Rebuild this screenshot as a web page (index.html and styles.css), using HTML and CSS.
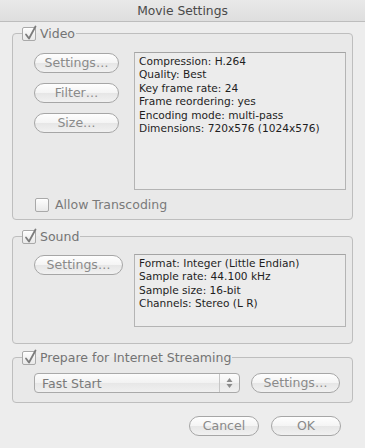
FILE: index.html
```html
<!DOCTYPE html>
<html lang="en">
<head>
    <meta charset="UTF-8">
    <meta name="viewport" content="width=device-width, initial-scale=1.0">
    <title>Movie Settings</title>
    <link rel="stylesheet" href="styles.css">
</head>
<body>
    <div class="window">
        <div class="titlebar">Movie Settings</div>

        <fieldset class="group group-video">
            <legend>
                <span class="check checked">
                    <svg width="14" height="14" viewBox="0 0 14 14"><path d="M3 6.5 L6 10.5 L12.5 -1.5" /></svg>
                </span>
                Video
            </legend>
            <div class="group-row">
                <div class="button-col">
                    <button class="btn">Settings…</button>
                    <button class="btn">Filter…</button>
                    <button class="btn">Size…</button>
                </div>
                <div class="info info-video">
                    Compression: H.264<br>
                    Quality: Best<br>
                    Key frame rate: 24<br>
                    Frame reordering: yes<br>
                    Encoding mode: multi-pass<br>
                    Dimensions: 720x576 (1024x576)
                </div>
            </div>
            <label class="check-row">
                <span class="check"></span>
                Allow Transcoding
            </label>
        </fieldset>

        <fieldset class="group group-sound">
            <legend>
                <span class="check checked">
                    <svg width="14" height="14" viewBox="0 0 14 14"><path d="M3 6.5 L6 10.5 L12.5 -1.5" /></svg>
                </span>
                Sound
            </legend>
            <div class="group-row">
                <div class="button-col">
                    <button class="btn btn-wide">Settings…</button>
                </div>
                <div class="info info-sound">
                    Format: Integer (Little Endian)<br>
                    Sample rate: 44.100 kHz<br>
                    Sample size: 16-bit<br>
                    Channels: Stereo (L R)
                </div>
            </div>
        </fieldset>

        <fieldset class="group group-stream">
            <legend>
                <span class="check checked">
                    <svg width="14" height="14" viewBox="0 0 14 14"><path d="M3 6.5 L6 10.5 L12.5 -1.5" /></svg>
                </span>
                Prepare for Internet Streaming
            </legend>
            <div class="stream-row">
                <div class="popup">
                    <span class="popup-label">Fast Start</span>
                    <span class="popup-arrows">
                        <svg width="7" height="12" viewBox="0 0 7 12"><path d="M3.5 1 L6.5 5 L0.5 5 Z M0.5 7 L6.5 7 L3.5 11 Z" /></svg>
                    </span>
                </div>
                <button class="btn btn-wide">Settings…</button>
            </div>
        </fieldset>

        <div class="footer">
            <button class="btn btn-footer">Cancel</button>
            <button class="btn btn-footer">OK</button>
        </div>
    </div>
</body>
</html>
```

FILE: styles.css
```css
body {
    margin: 0;
    padding: 0;
    background: #ededed;
    font-family: "DejaVu Sans", "Liberation Sans", sans-serif;
}

.window {
    width: 365px;
    height: 448px;
    background: #ededed;
    overflow: hidden;
}

.titlebar {
    height: 21px;
    line-height: 22px;
    text-align: center;
    font-size: 12.3px;
    color: #4a4a4a;
    background: linear-gradient(#e9e9e9, #dedede);
    border-bottom: 1px solid #bdbdbd;
}

/* group boxes */
.group {
    margin: 0 12px;
    padding: 0 6px 0 21px;
    border: 1px solid #bebebe;
    border-radius: 4px;
    background: rgba(0, 0, 0, 0.015);
    min-inline-size: 0;
}

.group legend {
    display: flex;
    align-items: center;
    gap: 4px;
    height: 15px;
    margin-left: -12px;
    padding: 0 1px 0 0;
    font-size: 12.5px;
    color: #747474;
}

.group-video {
    margin-top: 4px;
    padding-top: 11px;
    padding-bottom: 7px;
}

.group-sound {
    margin-top: 9px;
    padding-top: 10px;
    padding-bottom: 16px;
}

.group-stream {
    margin-top: 6px;
    padding-top: 8px;
    padding-bottom: 9px;
}

.group-row {
    display: flex;
    align-items: flex-start;
}

.button-col {
    display: flex;
    flex-direction: column;
    gap: 10px;
    width: 85px;
    margin-top: 1px;
}

/* checkboxes */
.check {
    position: relative;
    display: inline-block;
    width: 12px;
    height: 12px;
    border: 1px solid #a9a9a9;
    border-radius: 2px;
    background: linear-gradient(#fdfdfd, #e9e9e9);
    box-shadow: inset 0 1px 0 #fff;
}

.check svg {
    position: absolute;
    left: 0;
    top: 0;
    overflow: visible;
}

.check svg path {
    fill: none;
    stroke: #7c7c7c;
    stroke-width: 1.8;
    stroke-linecap: round;
    stroke-linejoin: round;
}

.check-row {
    display: flex;
    align-items: center;
    gap: 6px;
    height: 15px;
    margin: 7px 0 0 1px;
    font-size: 12.5px;
    color: #7a7a7a;
}

/* buttons */
.btn {
    display: block;
    width: 85px;
    height: 20px;
    padding: 0;
    border: 1px solid #a6a6a6;
    border-radius: 10px;
    background: linear-gradient(#fefefe 0%, #f4f4f4 50%, #e6e6e6 51%, #f1f1f1 100%);
    font-family: "DejaVu Sans", "Liberation Sans", sans-serif;
    font-size: 12.5px;
    line-height: 18px;
    color: #8a8a8a;
    text-align: center;
}

.btn-wide {
    width: 89px;
}

.btn-footer {
    width: 70px;
}

/* info boxes */
.info {
    margin-left: auto;
    width: 202px;
    padding: 2px 4px;
    border: 1px solid #b4b4b4;
    border-top-color: #a4a4a4;
    background: #ececec;
    font-size: 10.6px;
    line-height: 13.4px;
    color: #1e1e1e;
    white-space: nowrap;
}

.info-video {
    height: 132px;
}

.info-sound {
    height: 67px;
}

/* streaming row */
.stream-row {
    display: flex;
    align-items: center;
    gap: 11px;
}

.popup {
    display: flex;
    align-items: center;
    width: 204px;
    height: 18px;
    border: 1px solid #a9a9a9;
    border-radius: 4px;
    background: linear-gradient(#fcfcfc 0%, #f2f2f2 50%, #e7e7e7 51%, #f0f0f0 100%);
}

.popup-label {
    flex: 1;
    padding-left: 7px;
    font-size: 12.5px;
    color: #7a7a7a;
}

.popup-arrows {
    display: flex;
    align-items: center;
    justify-content: center;
    width: 19px;
    height: 18px;
    border-left: 1px solid #c6c6c6;
}

.popup-arrows path {
    fill: #8a8a8a;
}

/* footer */
.footer {
    display: flex;
    justify-content: flex-end;
    gap: 12px;
    margin-top: 13px;
    padding-right: 24px;
}
```
